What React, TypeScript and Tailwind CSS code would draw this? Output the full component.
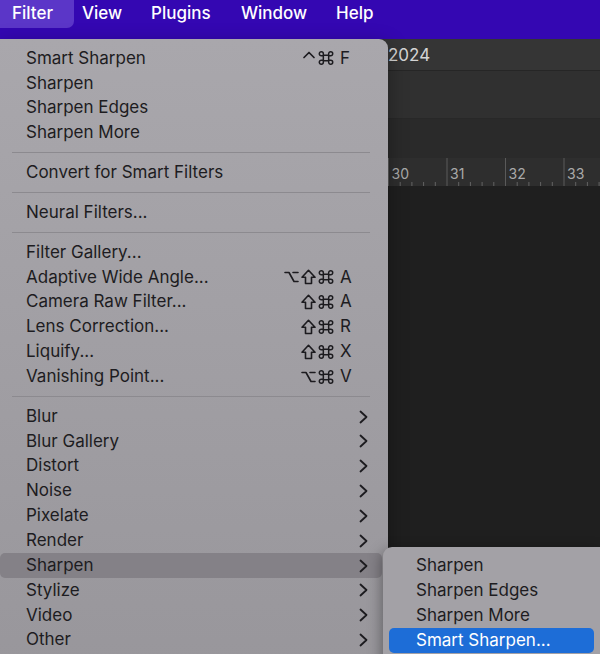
import React from 'react'

const font = { fontFamily: 'Inter, "DejaVu Sans", sans-serif' }

type Row =
  | { kind: 'item'; label: string; keys?: string[]; sub?: boolean; active?: boolean }
  | { kind: 'sep' }

const rows: Row[] = [
  { kind: 'item', label: 'Smart Sharpen', keys: ['ctrl', 'cmd', 'F'] },
  { kind: 'item', label: 'Sharpen' },
  { kind: 'item', label: 'Sharpen Edges' },
  { kind: 'item', label: 'Sharpen More' },
  { kind: 'sep' },
  { kind: 'item', label: 'Convert for Smart Filters' },
  { kind: 'sep' },
  { kind: 'item', label: 'Neural Filters...' },
  { kind: 'sep' },
  { kind: 'item', label: 'Filter Gallery...' },
  { kind: 'item', label: 'Adaptive Wide Angle...', keys: ['opt', 'shift', 'cmd', 'A'] },
  { kind: 'item', label: 'Camera Raw Filter...', keys: ['shift', 'cmd', 'A'] },
  { kind: 'item', label: 'Lens Correction...', keys: ['shift', 'cmd', 'R'] },
  { kind: 'item', label: 'Liquify...', keys: ['shift', 'cmd', 'X'] },
  { kind: 'item', label: 'Vanishing Point...', keys: ['opt', 'cmd', 'V'] },
  { kind: 'sep' },
  { kind: 'item', label: 'Blur', sub: true },
  { kind: 'item', label: 'Blur Gallery', sub: true },
  { kind: 'item', label: 'Distort', sub: true },
  { kind: 'item', label: 'Noise', sub: true },
  { kind: 'item', label: 'Pixelate', sub: true },
  { kind: 'item', label: 'Render', sub: true },
  { kind: 'item', label: 'Sharpen', sub: true, active: true },
  { kind: 'item', label: 'Stylize', sub: true },
  { kind: 'item', label: 'Video', sub: true },
  { kind: 'item', label: 'Other', sub: true },
]

const subItems = ['Sharpen', 'Sharpen Edges', 'Sharpen More', 'Smart Sharpen...']

const ink = '#1c1b1f'

const Chevron = () => (
  <svg width="9" height="14" viewBox="0 0 9 14" fill="none">
    <path d="M1.5 1.5 L7.5 7 L1.5 12.5" stroke={ink} strokeWidth="1.8" strokeLinecap="round" strokeLinejoin="round" />
  </svg>
)

// modifier key glyphs
const Mod = ({ k }: { k: string }) => {
  if (k === 'shift')
    return (
      <svg width="15" height="16" viewBox="0 0 15 16" fill="none">
        <path d="M7.5 1.3 L14 8.3 H10.5 V14.5 H4.5 V8.3 H1 Z" stroke={ink} strokeWidth="1.6" strokeLinejoin="round" />
      </svg>
    )
  if (k === 'opt')
    return (
      <svg width="15" height="14" viewBox="0 0 15 14" fill="none">
        <path d="M1 2.5 H5 L10 11.5 H14 M9 2.5 H14" stroke={ink} strokeWidth="1.6" strokeLinecap="round" strokeLinejoin="round" />
      </svg>
    )
  if (k === 'ctrl')
    return (
      <svg width="14" height="16" viewBox="0 0 14 16" fill="none">
        <path d="M2 7.5 L7 2.5 L12 7.5" stroke={ink} strokeWidth="1.7" strokeLinecap="round" strokeLinejoin="round" />
      </svg>
    )
  return (
    <svg width="16" height="16" viewBox="0 0 15 15" fill="none">
      <path
        d="M5 5 H10 V10 H5 Z M5 5 V3.5 A1.9 1.9 0 1 0 3.1 5.4 H5 M10 5 V3.5 A1.9 1.9 0 1 1 11.9 5.4 H10 M5 10 V11.5 A1.9 1.9 0 1 1 3.1 9.6 H5 M10 10 V11.5 A1.9 1.9 0 1 0 11.9 9.6 H10"
        stroke={ink}
        strokeWidth="1.4"
        strokeLinejoin="round"
      />
    </svg>
  )
}

const Ruler = () => {
  const pitch = 58.5
  const start = 388.5
  const ticks: React.ReactNode[] = []
  for (let u = -1; u < 5; u++) {
    const x = start + u * pitch
    ticks.push(<line key={'M' + u} x1={x} y1={0} x2={x} y2={28} stroke="#5a5a5a" strokeWidth="1" />)
    for (let k = 1; k < 5; k++) {
      const mx = x + (k * pitch) / 5
      ticks.push(<line key={'m' + u + k} x1={mx} y1={24} x2={mx} y2={28} stroke="#636363" strokeWidth="1" />)
    }
    if (u >= 0) {
      ticks.push(
        <text key={'t' + u} x={x + 3} y={21} fill="#a9a9a9" fontSize="14" fontFamily="Inter, sans-serif">
          {30 + u}
        </text>
      )
    }
  }
  return (
    <svg width="600" height="28" className="block">
      {ticks}
    </svg>
  )
}

const App = () => {
  return (
    <div className="relative w-[600px] h-[654px] overflow-hidden bg-[#1f1f1f] select-none" style={font}>
      {/* Menu bar */}
      <div className="h-[39px] bg-[#3407b2] flex items-start text-white text-[17px] font-medium">
        <div className="w-[74px] h-[28px] bg-[#5b36c8] rounded-br-[7px] pl-[12px] flex items-center">Filter</div>
        <div className="ml-[8px] w-[69px] h-[28px] flex items-center">View</div>
        <div className="w-[90px] h-[28px] flex items-center">Plugins</div>
        <div className="w-[95px] h-[28px] flex items-center">Window</div>
        <div className="h-[28px] flex items-center">Help</div>
      </div>

      {/* Document area behind the menus */}
      <div className="h-[32px] bg-[#353535] border-b border-[#262626] pl-[388px] pt-[3px] flex items-center text-[17px] text-[#d4d4d4]">
        2024
      </div>
      <div className="h-[48px] bg-[#303030] border-b border-[#282828]" />
      <div className="h-[39px] bg-[#2a2a2a]" />
      <div className="h-[28px] bg-[#2e2e2e]">
        <Ruler />
      </div>

      {/* Filter menu */}
      <div className="absolute left-0 top-[39px] w-[388px] h-[640px] rounded-tr-[9px] bg-gradient-to-b from-[#a9a7ac] to-[#98969b] shadow-[0_6px_20px_rgba(0,0,0,0.35)] pt-[7px] text-[17px] text-[#1d1c21]">
        {rows.map((r, i) =>
          r.kind === 'sep' ? (
            <div key={i} className="h-[15px] flex items-center">
              <div className="ml-[12px] mr-[18px] flex-1 h-px bg-[#8c8a8f]" />
            </div>
          ) : (
            <div
              key={i}
              className={`h-[24.85px] mr-[6px] rounded-[5px] flex items-center pl-[26px] pr-[14px] ${
                r.active ? 'bg-[#848187]' : ''
              }`}
            >
              <span className="flex-1 whitespace-nowrap">{r.label}</span>
              {r.keys && (
                <span className="flex items-center mr-[16px]">
                  {r.keys.map((k, j) =>
                    j === r.keys!.length - 1 ? (
                      <span key={j} className="w-[12px] ml-[6px]">
                        {k}
                      </span>
                    ) : (
                      <span key={j} className="w-[17px] flex justify-center">
                        <Mod k={k} />
                      </span>
                    )
                  )}
                </span>
              )}
              {r.sub && <Chevron />}
            </div>
          )
        )}
      </div>

      {/* Sharpen submenu */}
      <div className="absolute left-[383px] top-[547px] w-[217px] h-[120px] rounded-tl-[9px] bg-[#a3a1a6] shadow-[-2px_4px_14px_rgba(0,0,0,0.35)] pt-[6.5px] px-[6px] text-[17px] text-[#1d1c21]">
        {subItems.map((s, i) => (
          <div
            key={i}
            className={`h-[24.9px] rounded-[5px] flex items-center pl-[27px] whitespace-nowrap ${
              i === 3 ? 'bg-[#1d6dd7] text-white' : ''
            }`}
          >
            {s}
          </div>
        ))}
      </div>
    </div>
  )
}

export default App
